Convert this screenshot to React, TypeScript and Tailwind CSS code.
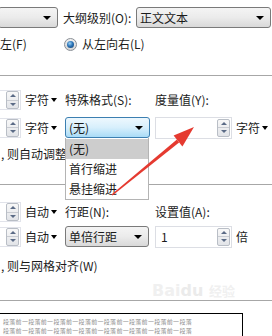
import React from 'react';

function Caret() {
  return <span className="ml-[2px] inline-block h-0 w-0 border-x-[3px] border-t-[4px] border-x-transparent border-t-black" />;
}

function Spinner() {
  return (
    <div className="flex h-[18px] w-[13px] flex-col rounded-[2px] border border-[#b9bec6] bg-gradient-to-b from-[#f8f8f8] to-[#e2e4e8]">
      <div className="flex flex-1 items-center justify-center border-b border-[#c9ccd2]">
        <span className="h-0 w-0 border-x-[3px] border-b-[3px] border-x-transparent border-b-[#5b6b86]" />
      </div>
      <div className="flex flex-1 items-center justify-center">
        <span className="h-0 w-0 border-x-[3px] border-t-[3px] border-x-transparent border-t-[#5b6b86]" />
      </div>
    </div>
  );
}

function LeftSpin({ label }: { label: string }) {
  return (
    <div className="flex w-[65px] items-center">
      <div className="-ml-[10px] flex h-[20px] w-[31px] items-center justify-end border border-[#e1e3ea] pr-[1px]">
        <Spinner />
      </div>
      <span className="ml-[4px] flex items-center whitespace-nowrap">
        {label}
        <Caret />
      </span>
    </div>
  );
}

function GrayCombo({ text, className }: { text: string; className: string }) {
  return (
    <div
      className={`flex h-[21px] items-center justify-between rounded-[3px] border border-[#7a7a7a] bg-gradient-to-b from-[#f4f4f4] via-[#ebebeb] to-[#d9d9d9] pl-[3px] pr-[6px] ${className}`}
    >
      <span className="whitespace-nowrap">{text}</span>
      <span className="h-0 w-0 border-x-[4px] border-t-[4px] border-x-transparent border-t-black" />
    </div>
  );
}

export default function App() {
  return (
    <div className="relative h-[336px] w-[272px] overflow-hidden bg-white font-['Noto_Sans_CJK_SC',sans-serif] text-[12px] leading-none text-[#1b1b1b]">
      {/* 大纲级别 */}
      <div className="mt-[7px] flex h-[21px] items-center">
        <GrayCombo text="" className="-ml-[2px] w-[60px]" />
        <span className="w-[78px] whitespace-nowrap pl-[5px]">大纲级别(O):</span>
        <GrayCombo text="正文文本" className="w-[135px]" />
      </div>

      {/* 方向 */}
      <div className="mt-[6px] flex h-[20px] items-center">
        <span className="w-[64px] whitespace-nowrap">左(F)</span>
        <div className="flex h-[13px] w-[13px] items-center justify-center rounded-full border border-[#8a8f96] bg-gradient-to-b from-[#f0f0f0] to-[#d6d6d6]">
          <div className="h-[7px] w-[7px] rounded-full bg-[radial-gradient(circle_at_40%_35%,#9fd4f5_0%,#2b74b8_45%,#123a66_100%)]" />
        </div>
        <span className="ml-[5px] whitespace-nowrap">从左向右(L)</span>
      </div>

      <div className="mt-[21px] h-px w-full bg-[#a7a7a7]" />

      {/* 缩进 */}
      <div className="mt-[15px] flex h-[18px] items-center">
        <LeftSpin label="字符" />
        <span className="w-[90px] whitespace-nowrap">特殊格式(S):</span>
        <span className="whitespace-nowrap">度量值(Y):</span>
      </div>

      <div className="mt-[8px] flex h-[21px] items-center">
        <LeftSpin label="字符" />
        <div className="w-[90px]">
          <div className="flex h-[21px] w-[85px] items-center justify-between rounded-[3px] border border-[#3c7fb1] bg-gradient-to-b from-[#eef8fe] via-[#d7effc] to-[#a9dbf6] pl-[3px] pr-[6px]">
            <span>(无)</span>
            <span className="h-0 w-0 border-x-[4px] border-t-[4px] border-x-transparent border-t-black" />
          </div>
        </div>
        <div className="flex h-[22px] w-[77px] items-center justify-end border border-[#dcdee4] pr-[1px]">
          <Spinner />
        </div>
        <span className="ml-[4px] flex items-center whitespace-nowrap">
          字符
          <Caret />
        </span>
      </div>

      <div className="mt-[8px] flex h-[16px] w-[65px] items-center overflow-hidden">
        <span className="ml-px whitespace-nowrap">, 则自动调整</span>
      </div>

      <div className="mt-[22px] h-px w-full bg-[#a7a7a7]" />

      {/* 间距 */}
      <div className="mt-[18px] flex h-[18px] items-center">
        <LeftSpin label="自动" />
        <span className="w-[90px] whitespace-nowrap">行距(N):</span>
        <span className="whitespace-nowrap">设置值(A):</span>
      </div>

      <div className="mt-[5px] flex h-[21px] items-center">
        <LeftSpin label="自动" />
        <div className="w-[90px]">
          <GrayCombo text="单倍行距" className="w-[84px]" />
        </div>
        <div className="flex h-[22px] w-[77px] items-center justify-between border border-[#dcdee4] pl-[5px] pr-[1px]">
          <span>1</span>
          <Spinner />
        </div>
        <span className="ml-[4px] whitespace-nowrap">倍</span>
      </div>

      <div className="mt-[11px] flex h-[16px] items-center">
        <span className="ml-px whitespace-nowrap">, 则与网格对齐(W)</span>
      </div>

      <div className="mt-[26px] h-px w-full bg-[#a7a7a7]" />

      {/* 预览 */}
      <div className="-ml-px mt-[12px] h-[40px] w-[244px] border border-black pl-[3px] pt-[3px] text-[6px] leading-[9px] tracking-[0.3px] text-[#8f8f8f]">
        <div className="whitespace-nowrap">段落前一段落前一段落前一段落前一段落前一段落前一段落前一段落</div>
        <div className="whitespace-nowrap">段落前一段落前一段落前一段落前一段落前一段落前一段落前一段落</div>
      </div>

      {/* 下拉列表 */}
      <div className="absolute left-[65px] top-[138px] flex h-[62px] w-[84px] flex-col border-x border-b border-[#b4b4b4] bg-white pt-px">
        <div className="flex h-[20px] items-center bg-[#cdcdcd] pl-[3px]">(无)</div>
        <div className="flex h-[21px] items-center pl-[3px]">首行缩进</div>
        <div className="flex h-[20px] items-center pl-[3px]">悬挂缩进</div>
      </div>

      {/* 水印 */}
      <div className="pointer-events-none absolute left-[152px] top-[283px] whitespace-nowrap font-['DejaVu_Sans',sans-serif] text-[16px] font-bold text-[#f0f0f0]">
        Bai<span className="text-[#ebebeb]">du</span> <span className="font-['Noto_Sans_CJK_SC',sans-serif] text-[13px]">经验</span>
      </div>

      {/* 红色箭头 */}
      <svg className="pointer-events-none absolute left-0 top-0" width="272" height="336" viewBox="0 0 272 336">
        <polygon points="111.5,194.4 112.5,195.6 179.1,142.4 176.9,139.6" fill="#e53a30" />
        <polygon points="194,127 182.4,146.4 173.6,135.6" fill="#e53a30" />
      </svg>
    </div>
  );
}
